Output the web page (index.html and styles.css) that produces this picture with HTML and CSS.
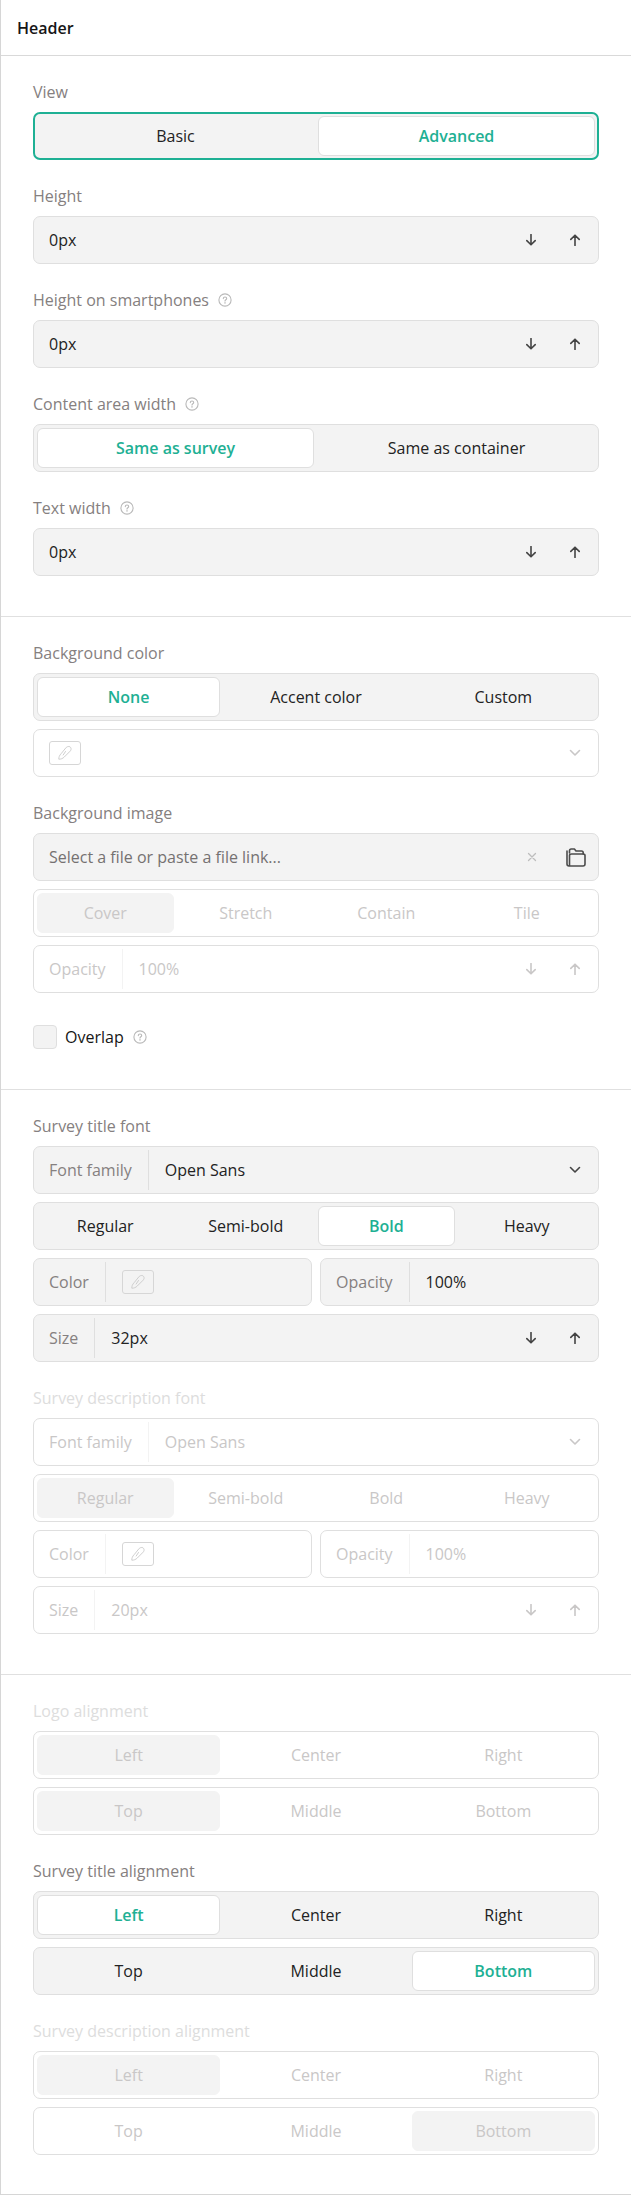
FILE: index.html
```html
<!DOCTYPE html>
<html lang="en">
<head>
    <meta charset="UTF-8">
    <title>Header settings</title>
    <link rel="stylesheet" href="styles.css">
</head>
<body>
    <svg class="sprite" width="0" height="0">
        <symbol id="i-down" viewBox="0 0 12 12"><path d="M6 .5v10M1.800 6.600 6 10.800l4.200-4.200"/></symbol>
        <symbol id="i-up" viewBox="0 0 12 12"><path d="M6 11.500v-10M1.800 5.400 6 1.200l4.200 4.200"/></symbol>
        <symbol id="i-chevron" viewBox="0 0 12 8"><path d="M1.500 1.500 6 6l4.500-4.500"/></symbol>
        <symbol id="i-x" viewBox="0 0 10 10"><path d="m1.500 1.500 7 7M8.500 1.500l-7 7"/></symbol>
        <symbol id="i-help" viewBox="0 0 14 14"><circle cx="7" cy="7" r="6.100"/><path d="M5.300 5.600c0-1 .8-1.600 1.700-1.600s1.700.6 1.700 1.500c0 1.300-1.700 1.300-1.700 2.500M7 9.300v1"/></symbol>
        <symbol id="i-dropper" viewBox="0 0 16 16"><path d="M9.500 2.200c1.400-1.100 3.400-1 4.200.3.700 1.200.4 2.700-.5 3.600L7.300 12c-1.500 1.500-3.500 2.300-5.500 2.200-.1-2 .7-3.900 2.100-5.300z"/><path d="M8.500 6.500 6.200 10"/></symbol>
        <symbol id="i-folder" viewBox="0 0 20 19"><path d="M3.500 5V2.800c0-1 .7-1.800 1.700-1.800h3.200l1.600 2h5.500c1 0 1.700.7 1.700 1.700V6"/><path d="M1 3v13c0 1 .8 2 2 2h14c1 0 2-1 2-2V7.500C19 6.500 18 6 17 6H5.500C4.500 6 3.500 6.500 3.500 7.500V18"/></symbol>
    </svg>

    <div class="panel">
        <div class="panel-title">Header</div>

        <section class="section">
            <div class="field">
                <div class="label">View</div>
                <div class="seg seg-focus">
                    <div class="seg-item">Basic</div>
                    <div class="seg-item active">Advanced</div>
                </div>
            </div>
            <div class="field">
                <div class="label">Height</div>
                <div class="box">
                    <div class="value">0px</div>
                    <svg class="ico arrow arrow-down"><use href="#i-down"/></svg>
                    <svg class="ico arrow arrow-up"><use href="#i-up"/></svg>
                </div>
            </div>
            <div class="field">
                <div class="label">Height on smartphones <svg class="ico help"><use href="#i-help"/></svg></div>
                <div class="box">
                    <div class="value">0px</div>
                    <svg class="ico arrow arrow-down"><use href="#i-down"/></svg>
                    <svg class="ico arrow arrow-up"><use href="#i-up"/></svg>
                </div>
            </div>
            <div class="field">
                <div class="label">Content area width <svg class="ico help"><use href="#i-help"/></svg></div>
                <div class="seg">
                    <div class="seg-item active">Same as survey</div>
                    <div class="seg-item">Same as container</div>
                </div>
            </div>
            <div class="field">
                <div class="label">Text width <svg class="ico help"><use href="#i-help"/></svg></div>
                <div class="box">
                    <div class="value">0px</div>
                    <svg class="ico arrow arrow-down"><use href="#i-down"/></svg>
                    <svg class="ico arrow arrow-up"><use href="#i-up"/></svg>
                </div>
            </div>
        </section>

        <section class="section">
            <div class="field">
                <div class="label">Background color</div>
                <div class="stack">
                    <div class="seg">
                        <div class="seg-item active">None</div>
                        <div class="seg-item">Accent color</div>
                        <div class="seg-item">Custom</div>
                    </div>
                    <div class="box off">
                        <div class="value"><div class="chip"><svg class="ico dropper"><use href="#i-dropper"/></svg></div></div>
                        <svg class="ico chevron"><use href="#i-chevron"/></svg>
                    </div>
                </div>
            </div>
            <div class="field">
                <div class="label">Background image</div>
                <div class="stack">
                    <div class="box">
                        <div class="value placeholder">Select a file or paste a file link...</div>
                        <svg class="ico clear"><use href="#i-x"/></svg>
                        <svg class="ico folder"><use href="#i-folder"/></svg>
                    </div>
                    <div class="seg off">
                        <div class="seg-item active">Cover</div>
                        <div class="seg-item">Stretch</div>
                        <div class="seg-item">Contain</div>
                        <div class="seg-item">Tile</div>
                    </div>
                    <div class="box off">
                        <div class="addon">Opacity</div>
                        <div class="value">100%</div>
                        <svg class="ico arrow arrow-down"><use href="#i-down"/></svg>
                        <svg class="ico arrow arrow-up"><use href="#i-up"/></svg>
                    </div>
                </div>
            </div>
            <div class="check-row">
                <div class="checkbox"></div>
                <span>Overlap</span>
                <svg class="ico help"><use href="#i-help"/></svg>
            </div>
        </section>

        <section class="section">
            <div class="field">
                <div class="label">Survey title font</div>
                <div class="stack">
                    <div class="box">
                        <div class="addon">Font family</div>
                        <div class="value">Open Sans</div>
                        <svg class="ico chevron"><use href="#i-chevron"/></svg>
                    </div>
                    <div class="seg">
                        <div class="seg-item">Regular</div>
                        <div class="seg-item">Semi-bold</div>
                        <div class="seg-item active">Bold</div>
                        <div class="seg-item">Heavy</div>
                    </div>
                    <div class="pair">
                        <div class="box">
                            <div class="addon">Color</div>
                            <div class="value"><div class="chip"><svg class="ico dropper"><use href="#i-dropper"/></svg></div></div>
                        </div>
                        <div class="box">
                            <div class="addon">Opacity</div>
                            <div class="value">100%</div>
                        </div>
                    </div>
                    <div class="box">
                        <div class="addon">Size</div>
                        <div class="value">32px</div>
                        <svg class="ico arrow arrow-down"><use href="#i-down"/></svg>
                        <svg class="ico arrow arrow-up"><use href="#i-up"/></svg>
                    </div>
                </div>
            </div>
            <div class="field">
                <div class="label off-label">Survey description font</div>
                <div class="stack">
                    <div class="box off">
                        <div class="addon">Font family</div>
                        <div class="value">Open Sans</div>
                        <svg class="ico chevron"><use href="#i-chevron"/></svg>
                    </div>
                    <div class="seg off">
                        <div class="seg-item active">Regular</div>
                        <div class="seg-item">Semi-bold</div>
                        <div class="seg-item">Bold</div>
                        <div class="seg-item">Heavy</div>
                    </div>
                    <div class="pair">
                        <div class="box off">
                            <div class="addon">Color</div>
                            <div class="value"><div class="chip"><svg class="ico dropper"><use href="#i-dropper"/></svg></div></div>
                        </div>
                        <div class="box off">
                            <div class="addon">Opacity</div>
                            <div class="value">100%</div>
                        </div>
                    </div>
                    <div class="box off">
                        <div class="addon">Size</div>
                        <div class="value">20px</div>
                        <svg class="ico arrow arrow-down"><use href="#i-down"/></svg>
                        <svg class="ico arrow arrow-up"><use href="#i-up"/></svg>
                    </div>
                </div>
            </div>
        </section>

        <section class="section">
            <div class="field">
                <div class="label off-label">Logo alignment</div>
                <div class="stack">
                    <div class="seg off">
                        <div class="seg-item active">Left</div>
                        <div class="seg-item">Center</div>
                        <div class="seg-item">Right</div>
                    </div>
                    <div class="seg off">
                        <div class="seg-item active">Top</div>
                        <div class="seg-item">Middle</div>
                        <div class="seg-item">Bottom</div>
                    </div>
                </div>
            </div>
            <div class="field">
                <div class="label">Survey title alignment</div>
                <div class="stack">
                    <div class="seg">
                        <div class="seg-item active">Left</div>
                        <div class="seg-item">Center</div>
                        <div class="seg-item">Right</div>
                    </div>
                    <div class="seg">
                        <div class="seg-item">Top</div>
                        <div class="seg-item">Middle</div>
                        <div class="seg-item active">Bottom</div>
                    </div>
                </div>
            </div>
            <div class="field">
                <div class="label off-label">Survey description alignment</div>
                <div class="stack">
                    <div class="seg off">
                        <div class="seg-item active">Left</div>
                        <div class="seg-item">Center</div>
                        <div class="seg-item">Right</div>
                    </div>
                    <div class="seg off">
                        <div class="seg-item">Top</div>
                        <div class="seg-item">Middle</div>
                        <div class="seg-item active">Bottom</div>
                    </div>
                </div>
            </div>
        </section>
    </div>
</body>
</html>
```

FILE: styles.css
```css
* {
    box-sizing: border-box;
}
body {
    margin: 0;
    background-color: #fff;
    color: #222;
    font-family: 'Open Sans', sans-serif;
    font-size: 16px;
    line-height: 24px;
}
.sprite {
    position: absolute;
}
.panel {
    width: 631px;
    height: 2195px;
    border-left: 1px solid #d6d6d6;
    border-bottom: 1px solid #d6d6d6;
}
.panel-title {
    height: 56px;
    padding: 16px 16px;
    border-bottom: 1px solid #d9d9d9;
    color: #161616;
    font-weight: 600;
}
.section {
    padding: 24px 32px 40px;
    border-bottom: 1px solid #e0e0e0;
}
.section:last-child {
    border-bottom: none;
}
.field {
    margin-bottom: 24px;
}
.field:last-child {
    margin-bottom: 0;
}
.label {
    display: flex;
    align-items: center;
    gap: 9px;
    margin-bottom: 8px;
    color: #858080;
}
.off-label {
    color: #ddd;
}
.stack {
    display: flex;
    flex-direction: column;
    gap: 8px;
}
.pair {
    display: flex;
    gap: 8px;
}
.pair .box {
    flex: 1;
    min-width: 0;
}

/* segmented buttons */
.seg {
    display: flex;
    gap: 4px;
    height: 48px;
    padding: 3px;
    background-color: #f3f3f3;
    border: 1px solid #dfdfdf;
    border-radius: 7px;
}
.seg-item {
    flex: 1;
    min-width: 0;
    border: 1px solid transparent;
    border-radius: 6px;
    line-height: 38px;
    text-align: center;
}
.seg-item.active {
    background-color: #fff;
    border-color: #dfdfdf;
    color: #1eb094;
    font-weight: 600;
}
.seg-focus {
    padding: 2px;
    border: 2px solid #1eb094;
}
.seg.off {
    background-color: #fff;
    color: #c9c7c7;
}
.seg.off .seg-item.active {
    background-color: #f3f3f3;
    border-color: #f3f3f3;
    color: #c9c7c7;
    font-weight: 400;
}

/* inputs */
.box {
    display: flex;
    align-items: center;
    height: 48px;
    padding: 3px 0;
    background-color: #f3f3f3;
    border: 1px solid #dfdfdf;
    border-radius: 7px;
}
.addon {
    height: 40px;
    padding: 0 16px 0 15px;
    border-right: 1px solid #dfdfdf;
    color: #858080;
    line-height: 40px;
}
.value {
    flex: 1;
    min-width: 0;
    padding: 0 16px;
    white-space: nowrap;
}
.box > .value:first-child {
    padding-left: 15px;
}
.placeholder {
    color: #757171;
}
.box.off {
    background-color: #fff;
    color: #c9c7c7;
}
.box.off .addon {
    border-right-color: #f3f3f3;
    color: #c9c7c7;
}

/* icons */
.ico {
    display: block;
    flex: none;
    fill: none;
    stroke: currentColor;
    stroke-linecap: round;
    stroke-linejoin: round;
}
.arrow {
    width: 12px;
    height: 12px;
    stroke-width: 1.6;
    color: #444;
}
.arrow-down {
    margin-right: 32px;
}
.arrow-up {
    margin-right: 17px;
}
.off .arrow,
.off .chevron {
    color: #c9c7c7;
}
.chevron {
    width: 12px;
    height: 8px;
    margin-right: 17px;
    stroke-width: 1.6;
    color: #444;
}
.clear {
    width: 10px;
    height: 10px;
    margin-right: 29px;
    stroke-width: 1.3;
    color: #bdbdbd;
}
.folder {
    width: 20px;
    height: 19px;
    margin-right: 12px;
    stroke-width: 1.6;
    color: #4c4c4c;
}
.help {
    width: 14px;
    height: 14px;
    stroke-width: 1.1;
    color: #b9b9b9;
}
.chip {
    display: flex;
    align-items: center;
    justify-content: center;
    width: 32px;
    height: 24px;
    border: 1px solid #d6d6d6;
    border-radius: 3px;
}
.dropper {
    width: 16px;
    height: 16px;
    stroke-width: 0.9;
    color: #cacaca;
}

/* checkbox */
.check-row {
    display: flex;
    align-items: center;
    margin-top: 32px;
    color: #161616;
}
.checkbox {
    width: 24px;
    height: 24px;
    margin-right: 8px;
    background-color: #f3f3f3;
    border: 1px solid #dfdfdf;
    border-radius: 4px;
}
.check-row .help {
    margin-left: 9px;
}
```
